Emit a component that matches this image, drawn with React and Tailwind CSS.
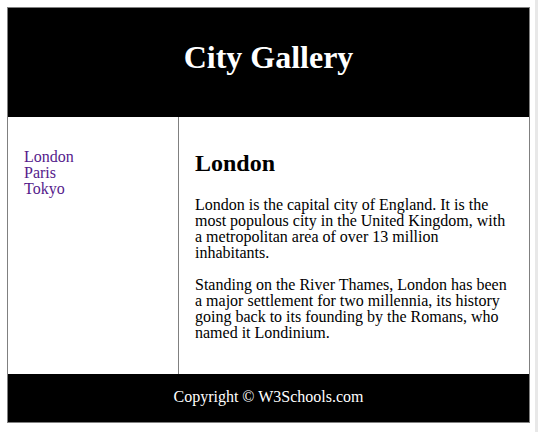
import React from 'react';

const cities = ['London', 'Paris', 'Tokyo'];

export default function App() {
    return (
        <div className="w-[538px] h-[432px] flex bg-white font-['Liberation_Serif',serif] leading-none text-black">
            <div className="ml-[7px] mt-[7px] w-[523px] h-[416px] border border-[#808080] flex flex-col">
                {/* Header */}
                <header className="h-[109px] bg-black pt-[33px] text-center">
                    <h1 className="text-[32px] font-bold text-white">City Gallery</h1>
                </header>

                <div className="flex h-[257px]">
                    <nav className="w-[171px] border-r border-[#808080] pt-[32px] pl-[16px]">
                        <ul>
                            {cities.map((c) => (
                                <li key={c}>
                                    <a href="#" className="text-[16px] text-[#551a8b]">{c}</a>
                                </li>
                            ))}
                        </ul>
                    </nav>

                    <article className="flex-1 pt-[34px] px-[16px] text-[16px]">
                        <h2 className="text-[24px] font-bold mb-[22px]">London</h2>
                        <p className="mb-[16px]">
                            London is the capital city of England. It is the most populous city in the United Kingdom, with a metropolitan area of over 13 million inhabitants.
                        </p>
                        <p>
                            Standing on the River Thames, London has been a major settlement for two millennia, its history going back to its founding by the Romans, who named it Londinium.
                        </p>
                    </article>
                </div>

                <footer className="flex-1 bg-black pt-[15px] text-center text-white text-[16px]">
                    Copyright © W3Schools.com
                </footer>
            </div>
            <div className="ml-auto w-[3px] h-full bg-[#e8e8e8]" />
        </div>
    );
}
